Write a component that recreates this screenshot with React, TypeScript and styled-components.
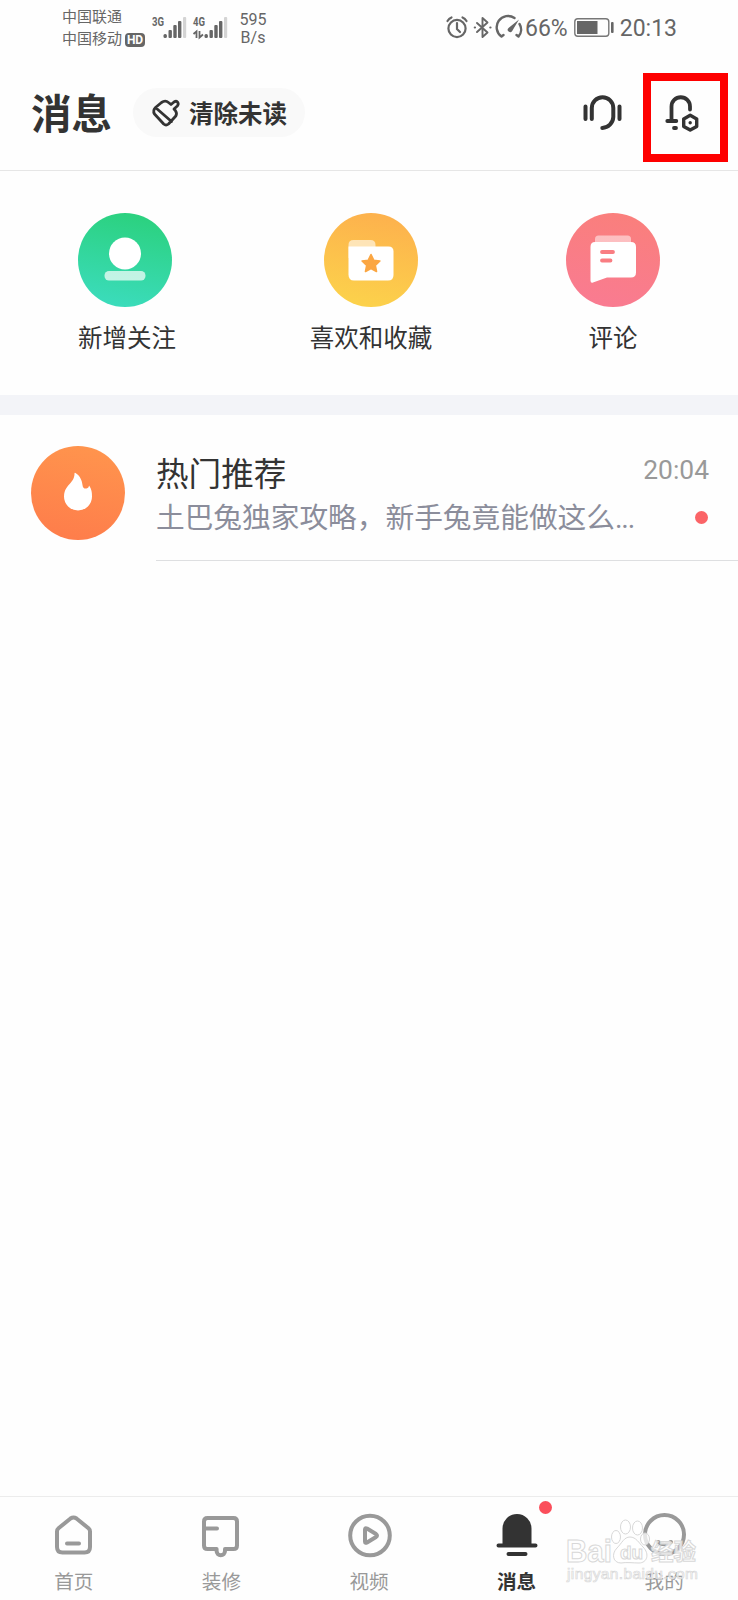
import React from "react";
import styled, { createGlobalStyle } from "styled-components";

const Global = createGlobalStyle`
  * { box-sizing: border-box; }
  html, body { margin: 0; padding: 0; background: #fefefe; }
  body { font-family: Roboto, "Noto Sans CJK SC", sans-serif; color: #333; }
  svg { display: block; flex: none; overflow: visible; }
`;

const Screen = styled.div`
  position: relative;
  width: 738px;
  height: 1600px;
  display: flex;
  flex-direction: column;
  background: #fefefe;
  overflow: hidden;
`;

const StatusBar = styled.div`
  height: 60px;
  display: flex;
  justify-content: space-between;
  padding: 0 61px 0 62px;
  color: #666;
`;

const StatusGroup = styled.div`
  display: flex;
  align-items: flex-start;
`;

const Carriers = styled.div`
  padding-top: 6px;
  width: 90px;
  font-size: 15px;
  line-height: 22px;
  white-space: nowrap;
`;

const CarrierLine = styled.div`
  display: flex;
  align-items: center;
  gap: 3px;
  height: 22px;
`;

const HdBadge = styled.span`
  width: 20px;
  height: 14px;
  margin-top: 1px;
  border-radius: 4px;
  background: #666;
  color: #fefefe;
  font-size: 12px;
  font-weight: 700;
  line-height: 14px;
  text-align: center;
`;

const Speed = styled.div`
  margin-left: 4px;
  padding-top: 10.5px;
  width: 30px;
  font-size: 16px;
  line-height: 18.5px;
  text-align: center;
`;

const StatusText = styled.span`
  font-size: 23px;
  line-height: 58px;
`;

const BatteryBox = styled.div`
  margin: 0 6px;
`;

const Header = styled.header`
  height: 111px;
  display: flex;
  align-items: flex-start;
  padding: 13px 10px 0 31px;
  border-bottom: 1px solid #e6e6e6;
`;

const Title = styled.h1`
  margin: 16px 0 0;
  width: 102px;
  font-size: 40.5px;
  line-height: 52px;
  font-weight: 700;
  white-space: nowrap;
`;

const ClearButton = styled.button`
  margin: 15px 0 0;
  width: 172px;
  height: 49px;
  border: 0;
  border-radius: 25px;
  padding: 0 0 0 19px;
  display: flex;
  align-items: center;
  gap: 10px;
  background: #f9f9f9;
  color: #333;
  font: 700 24.5px/46px "Noto Sans CJK SC", sans-serif;
  white-space: nowrap;
`;

const HeaderActions = styled.div`
  margin-left: auto;
  display: flex;
  align-items: flex-start;
  gap: 21px;
`;

const SupportButton = styled.div`
  padding-top: 22px;
`;

const Highlight = styled.div`
  width: 85px;
  height: 89px;
  border: 8px solid #fe0000;
  padding: 14px 0 0 15px;
`;

const Shortcuts = styled.section`
  height: 224px;
  display: flex;
  padding-top: 42px;
`;

const Shortcut = styled.div<{ $width: number }>`
  width: ${(p) => p.$width}px;
  display: flex;
  flex-direction: column;
  align-items: center;
`;

const ShortcutLabel = styled.div<{ $shift?: number }>`
  margin-top: 14.5px;
  padding-left: ${(p) => p.$shift ?? 0}px;
  font-size: 24.5px;
  line-height: 34px;
`;

const Band = styled.div`
  height: 20px;
  background: #f3f4f8;
`;

const Conversation = styled.article`
  display: flex;
  height: 146px;
  padding-left: 31px;
`;

const Avatar = styled.div`
  flex: none;
  padding-top: 31px;
  width: 125px;
`;

const ConversationBody = styled.div`
  flex: 1;
  min-width: 0;
  display: flex;
  justify-content: space-between;
  padding: 35px 29px 0 0;
  border-bottom: 1px solid #dedfe1;
`;

const Subject = styled.div`
  margin-top: 3px;
  font-size: 32.6px;
  line-height: 44px;
`;

const Preview = styled.div`
  width: 480px;
  font-size: 28.7px;
  line-height: 43px;
  color: #8b8d9b;
  white-space: nowrap;
`;

const Ellipsis = styled.span`
  letter-spacing: -1.2px;
`;

const Meta = styled.div`
  display: flex;
  flex-direction: column;
  align-items: flex-end;
`;

const Time = styled.div`
  font-size: 26.4px;
  line-height: 40px;
  color: #999;
`;

const Dot = styled.span<{ $color: string }>`
  width: 13px;
  height: 13px;
  border-radius: 50%;
  background: ${(p) => p.$color};
`;

const UnreadDot = styled(Dot)`
  margin: 21px 1px 0 0;
`;

const TabBar = styled.nav`
  margin-top: auto;
  height: 104px;
  display: flex;
  border-top: 1px solid #ececec;
`;

const Tab = styled.div<{ $active?: boolean }>`
  position: relative;
  flex: 1;
  display: flex;
  flex-direction: column;
  align-items: center;
  padding-top: 16px;
  font-size: 19.6px;
  line-height: 28px;
  color: ${(p) => (p.$active ? "#333" : "#999")};
  font-weight: ${(p) => (p.$active ? 700 : 400)};
`;

const TabLabel = styled.span`
  margin-top: 8px;
`;

const TabDot = styled(Dot)`
  position: absolute;
  left: 96px;
  top: 4px;
`;

const Watermark = styled.div`
  position: absolute;
  left: 564px;
  top: 1518px;
`;

const Signal = ({ label, data }: { label: string; data?: boolean }) => (
  <svg width="41" height="60" viewBox="0 0 41 60" fill="#666">
    <text x="0" y="26" fontSize="12.5" fontWeight="700" textLength="12" lengthAdjust="spacingAndGlyphs">{label}</text>
    {data && <path d="M.5 34l3-2.500v6.500M6.500 31v6.500l3.500-3" fill="none" stroke="#666" strokeWidth="1.8" />}
    <rect x="11.5" y="34" width="3.4" height="4" rx="1.500" />
    <rect x="16.500" y="30" width="3.400" height="8" rx="1" />
    <rect x="21.300" y="25" width="3.400" height="13" rx="1" />
    <rect x="26" y="21" width="3.400" height="17" rx="1" />
    <rect x="31" y="17" width="3.200" height="21" rx="1" fill="#d4d4d4" />
  </svg>
);

const StatusIcons = () => (
  <svg width="78" height="60" viewBox="447 0 78 60" fill="none" stroke="#666" strokeWidth="2.200" strokeLinecap="round">
    <circle cx="457" cy="28.500" r="8.600" />
    <path d="M457 23v6l3 3M447.500 21q1.500-2.500 4-3.500M466.500 21q-1.500-2.500-4-3.500" />
    <path d="M477 23l10.500 9.500-5 4.500V18l5 4.500L477 32" strokeWidth="1.900" strokeLinejoin="round" />
    <path d="M474.800 27.500h.2M490.300 27.500h.2" />
    <path d="M501.500 36.500a10.800 10.800 0 0 1 13-18.500M519.500 24a10.500 10.500 0 0 1-1 12.500M501.500 36.500l2-1.500M518.500 36.500l-2-1.500" strokeWidth="2.400" />
    <path d="M519 19.500l-10.500 8.500a2.400 2.400 0 1 0 3.700 3z" fill="#666" stroke="none" />
  </svg>
);

const Battery = () => (
  <svg width="40" height="60" viewBox="574 0 40 60">
    <rect x="574.800" y="18.800" width="34" height="17.400" rx="3" fill="none" stroke="#777" strokeWidth="1.400" />
    <rect x="577" y="21" width="20.500" height="13" fill="#666" />
    <rect x="611" y="22" width="2.600" height="11" rx="1" fill="#666" />
  </svg>
);

const Brush = () => (
  <svg width="27" height="28" viewBox="153 99 27 28" fill="none" stroke="#333" strokeWidth="2.800" strokeLinecap="round" strokeLinejoin="round">
    <path d="M156.500 107.500l6-5q3.800-2.800 7 0l2.500 2 3-2.500q2.500-1.500 3.700.3 1.200 1.900-.4 3.700l-3.300 3 1.500 1.700q1.800 2.600.3 5.300l-7.300 8q-2.500 2-4.800 0l-9.200-10q-2-3.500 1-6.500zM157 108l15.500 13.500" />
  </svg>
);

const Headset = () => (
  <svg width="39" height="36" viewBox="583.500 95 39 36" fill="none" stroke="#333" strokeWidth="4" strokeLinecap="round">
    <path d="M586 106.500v12.500M620 106.500v12.500M592.300 119v-11a10.700 10.700 0 0 1 21.500 0v9a11.500 11.500 0 0 1-11 11" />
  </svg>
);

const BellSettings = () => (
  <svg width="34" height="37" viewBox="666.500 94.500 34 37" fill="none" stroke="#333" strokeWidth="3.800" strokeLinecap="round" strokeLinejoin="round">
    <path d="M667.800 120.500h9M672 120v-14a9.200 9.200 0 0 1 18.500 0v3M674.500 127.500h2" />
    <path d="M690.700 114.800l6.500 3.700v7.400l-6.500 3.700-6.500-3.700v-7.400z" strokeWidth="3.400" />
    <circle cx="690.700" cy="122.300" r="1.700" fill="#333" stroke="none" />
  </svg>
);

const Disc = ({ id, from, to, children }: { id: string; from: string; to: string; children: React.ReactNode }) => (
  <svg width="94" height="94" viewBox="0 0 94 94">
    <defs>
      <linearGradient id={id} x1="0.6" y1="0" x2="0.4" y2="1">
        <stop stopColor={from} />
        <stop offset="1" stopColor={to} />
      </linearGradient>
    </defs>
    <circle cx="47" cy="47" r="47" fill={`url(#${id})`} />
    {children}
  </svg>
);

const TabIcon = ({ children }: { children: React.ReactNode }) => (
  <svg width="48" height="48" viewBox="0.5 0 48 48" fill="none" stroke="#999" strokeWidth="4" strokeLinecap="round" strokeLinejoin="round">
    {children}
  </svg>
);

export default function App() {
  return (
    <>
      <Global />
      <Screen>
        <StatusBar>
          <StatusGroup>
            <Carriers>
              <CarrierLine>中国联通</CarrierLine>
              <CarrierLine>中国移动<HdBadge>HD</HdBadge></CarrierLine>
            </Carriers>
            <Signal label="3G" />
            <Signal label="4G" data />
            <Speed>595<br />B/s</Speed>
          </StatusGroup>
          <StatusGroup>
            <StatusIcons />
            <StatusText>66%</StatusText>
            <BatteryBox><Battery /></BatteryBox>
            <StatusText>20:13</StatusText>
          </StatusGroup>
        </StatusBar>

        <Header>
          <Title>消息</Title>
          <ClearButton><Brush />清除未读</ClearButton>
          <HeaderActions>
            <SupportButton><Headset /></SupportButton>
            <Highlight><BellSettings /></Highlight>
          </HeaderActions>
        </Header>

        <Shortcuts>
          <Shortcut $width={250}>
            <Disc id="follow" from="#2bd17e" to="#3bdcbc">
              <circle cx="47" cy="40.500" r="16" fill="#fff" />
              <rect x="26.500" y="58" width="41" height="9.500" rx="4.500" fill="#fff" opacity=".7" />
            </Disc>
            <ShortcutLabel $shift={4}>新增关注</ShortcutLabel>
          </Shortcut>
          <Shortcut $width={242}>
            <Disc id="like" from="#fdb14d" to="#fcd24b">
              <path d="M24.500 45V32q0-5 5-5h17q5 0 5 5v8z" fill="#fff" opacity=".6" />
              <path d="M24.500 33.500H64.500q5 0 5 5V62q0 5.500-5.500 5.500h-34q-5.500 0-5.500-6z" fill="#fff" />
              <path d="M47 41.500l2.700 5.700 6.200.8-4.600 4.300 1.200 6.200-5.500-3-5.500 3 1.200-6.200-4.600-4.300 6.200-.8z" fill="#fba642" stroke="#fba642" strokeWidth="1.600" strokeLinejoin="round" />
            </Disc>
            <ShortcutLabel>喜欢和收藏</ShortcutLabel>
          </Shortcut>
          <Shortcut $width={242}>
            <Disc id="comment" from="#fa7f7c" to="#f97b91">
              <path d="M29 30v-4q0-3.500 3.500-3.500h29Q65 22.500 65 26v4z" fill="#fff" opacity=".5" />
              <path d="M29 29h36q5 0 5 5v25.500q0 5-5 5H41l-14 5q-2.500.8-2.500-2V34q0-5 4.500-5z" fill="#fff" />
              <path d="M36 39h11M36 47.500h8.500" stroke="#f97d82" strokeWidth="3.800" strokeLinecap="round" />
            </Disc>
            <ShortcutLabel>评论</ShortcutLabel>
          </Shortcut>
        </Shortcuts>

        <Band />

        <Conversation>
          <Avatar>
            <Disc id="hot" from="#ff944d" to="#fe7d4b">
              <path d="M44.500 27c5 3 6.500 8 7 12 .3 3 2 4 4 3.500 1.800-.5 2.300-1.500 2.500-3 3 4 3 8 3 11a14 14 0 0 1-28 0c0-7 3.500-10 6.500-13.500 3.500-4 4-7 4-9.500q0-1 1-.5z" fill="#fff" />
            </Disc>
          </Avatar>
          <ConversationBody>
            <div>
              <Subject>热门推荐</Subject>
              <Preview>土巴兔独家攻略，新手兔竟能做这么<Ellipsis>...</Ellipsis></Preview>
            </div>
            <Meta>
              <Time>20:04</Time>
              <UnreadDot $color="#fb6467" />
            </Meta>
          </ConversationBody>
        </Conversation>

        <TabBar>
          <Tab>
            <TabIcon>
              <path d="M21 5.500q3-2 6 0l12 9.800q1.500 1.300 1.500 3.200V34q0 5.500-5.500 5.500H13q-5.500 0-5.500-5.500V18.500q0-2 1.500-3.200zM17.500 30.500H29.500" />
            </TabIcon>
            <TabLabel>首页</TabLabel>
          </Tab>
          <Tab>
            <TabIcon>
              <path d="M12 5h25q3.500 0 3.500 3.500v24q0 3.500-3.500 3.500h-8.500v2a4.200 4.200 0 0 1-8.400 0V36H11q-3.500 0-3.500-3.500v-24Q7.500 5 11 5zM8 15.500h12.500" />
            </TabIcon>
            <TabLabel>装修</TabLabel>
          </Tab>
          <Tab>
            <TabIcon>
              <circle cx="25.500" cy="22.500" r="19.800" />
              <path d="M20.500 16.500v12q0 2 2 1l9-5.500q2-1.500 0-3l-9-5.500q-2-1-2 1z" />
            </TabIcon>
            <TabLabel>视频</TabLabel>
          </Tab>
          <Tab $active>
            <TabIcon>
              <path d="M10 32V15.500a14.500 14.500 0 0 1 29 0V32z" fill="#333" stroke="none" />
              <path d="M6 32.500h37M16 41h17" stroke="#333" />
            </TabIcon>
            <TabDot $color="#fb4e5b" />
            <TabLabel>消息</TabLabel>
          </Tab>
          <Tab>
            <TabIcon>
              <circle cx="25" cy="21.500" r="19.500" />
              <path d="M18.500 29q6.500 4.500 13 0" />
            </TabIcon>
            <TabLabel>我的</TabLabel>
          </Tab>
        </TabBar>

        <Watermark>
          <svg width="134" height="68" viewBox="564 1518 134 68" fill="#fff" fillOpacity=".75" stroke="#d8d8d8" strokeWidth="1" fontFamily='"Liberation Sans", "Noto Sans CJK SC", sans-serif'>
            <ellipse cx="616" cy="1537" rx="4.500" ry="6.500" />
            <ellipse cx="625.500" cy="1527" rx="5" ry="7" />
            <ellipse cx="637.500" cy="1528" rx="5" ry="7" />
            <ellipse cx="645" cy="1539" rx="4.500" ry="6" />
            <path d="M630 1537c6 0 9 6 13 10 7 7 4 16-4 16-5 0-13-1-18 0-8 0-10-9-4-15 5-5 7-11 13-11z" />
            <text x="566" y="1562" fontSize="31" fontWeight="700" textLength="46" lengthAdjust="spacingAndGlyphs">Bai</text>
            <text x="620" y="1559" fontSize="19" fontWeight="700">du</text>
            <text x="651" y="1560" fontSize="22.500" fontWeight="700">经验</text>
            <text x="567" y="1579" fontSize="15.500" strokeWidth=".7" textLength="131">jingyan.baidu.com</text>
          </svg>
        </Watermark>
      </Screen>
    </>
  );
}
